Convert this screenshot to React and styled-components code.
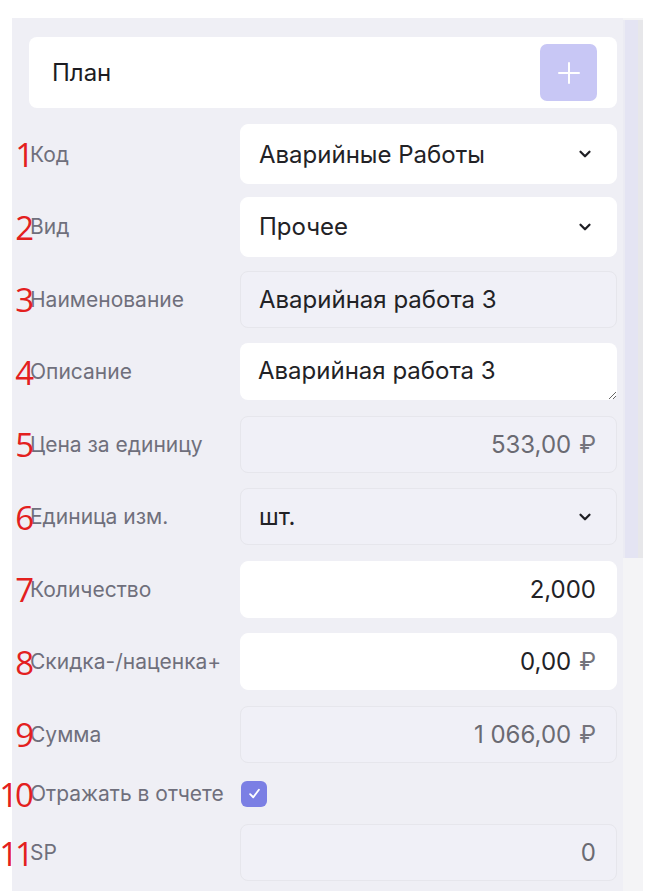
import React from "react";
import styled, { createGlobalStyle } from "styled-components";

const GlobalStyle = createGlobalStyle`
  html, body { margin: 0; padding: 0; background: #ffffff; }
  body { font-family: Inter, "Noto Sans", Arial, sans-serif; overflow: hidden; }
  * { box-sizing: border-box; }
`;

const Page = styled.div`
  padding: 18px 0 0 12px;
  height: 891px;
  overflow: hidden;
`;

const Panel = styled.div`
  width: 631px;
  height: 873px;
  display: flex;
  background: #efeff5;
`;

const Content = styled.div`
  width: 611px;
  flex: none;
  padding: 19px 6px 0 17px;
  display: flex;
  flex-direction: column;
`;

const ScrollTrack = styled.div`
  width: 20px;
  flex: none;
  background: #f4f4f6;
  display: flex;
  flex-direction: column;
  padding-top: 2px;
`;

const ScrollThumb = styled.div`
  height: 538px;
  background: #e4e4f3;
  border-left: 2px solid #ebebf3;
  border-right: 5px solid #e7e7ea;
`;

const HeaderCard = styled.div`
  height: 71px;
  flex: none;
  margin-bottom: 10px;
  background: #ffffff;
  border-radius: 8px;
  display: flex;
  align-items: center;
  justify-content: space-between;
  padding: 0 20px 0 23px;
`;

const Title = styled.div`
  font-size: 24px;
  color: #1c1c22;
`;

const AddButton = styled.button`
  width: 57px;
  height: 57px;
  border: none;
  border-radius: 7px;
  background: #c8c7f5;
  display: flex;
  align-items: center;
  justify-content: center;
  padding: 0;
`;

const Row = styled.div`
  display: grid;
  grid-template-columns: 211px 1fr;
  align-items: center;
  flex: none;
  height: ${(p) => p.$h || 72.5}px;
`;

const Label = styled.div`
  position: relative;
  font-size: 21px;
  color: #6f6f7c;
  padding-left: 1px;
  white-space: nowrap;
`;

const Marker = styled.span`
  position: absolute;
  right: calc(100% - 2px);
  top: 50%;
  transform: translateY(-50%);
  font-family: "Open Sans", "Noto Sans", sans-serif;
  font-size: 33px;
  line-height: 1;
  color: #e3201e;
  letter-spacing: -3px;
`;

const Field = styled.div`
  height: ${(p) => p.$h || 57}px;
  border-radius: 8px;
  display: flex;
  align-items: center;
  justify-content: ${(p) => (p.$right ? "flex-end" : "space-between")};
  padding: 0 ${(p) => (p.$right ? 20 : 22)}px 0 18px;
  font-size: 24px;
  color: ${(p) => (p.$muted ? "#6a6a72" : "#222226")};
  background: ${(p) => (p.$readonly ? "#f0f0f7" : "#ffffff")};
  border: 1px solid ${(p) => (p.$readonly ? "#e6e6ec" : "#ffffff")};
`;

const TextArea = styled.textarea`
  height: 57px;
  width: 100%;
  border: none;
  border-radius: 8px;
  background: #ffffff;
  font-family: Inter, "Noto Sans", Arial, sans-serif;
  font-size: 24px;
  line-height: 29px;
  color: #222226;
  padding: 13px 18px 0;
  resize: vertical;
  outline: none;
  overflow: hidden;
  display: block;
`;

const Rub = styled.span`
  color: #74747c;
  margin-left: 8px;
`;

const Checkbox = styled.span`
  width: 26px;
  height: 26px;
  border-radius: 6px;
  background: #7b7fe4;
  display: inline-flex;
  align-items: center;
  justify-content: center;
  margin-left: 1px;
  vertical-align: middle;
`;

const Chevron = () => (
  <svg width="18" height="18" viewBox="0 0 24 24" fill="none" stroke="#1f1f24" strokeWidth="3" strokeLinecap="round" strokeLinejoin="round">
    <polyline points="6 9 12 15 18 9" />
  </svg>
);

const Plus = () => (
  <svg width="24" height="24" viewBox="0 0 24 24" fill="none" stroke="#ffffff" strokeWidth="2" strokeLinecap="round">
    <line x1="12" y1="2" x2="12" y2="22" />
    <line x1="2" y1="12" x2="22" y2="12" />
  </svg>
);

const Check = () => (
  <svg width="15" height="15" viewBox="0 0 24 24" fill="none" stroke="#ffffff" strokeWidth="3" strokeLinecap="round" strokeLinejoin="round">
    <polyline points="5 13 10 18 19 6" />
  </svg>
);

const FieldRow = ({ n, label, children, h }) => (
  <Row $h={h}>
    <Label>
      <Marker>{n}</Marker>
      {label}
    </Label>
    <div>{children}</div>
  </Row>
);

export default function App() {
  return (
    <>
      <GlobalStyle />
      <Page>
        <Panel>
          <Content>
            <HeaderCard>
              <Title>План</Title>
              <AddButton aria-label="Добавить">
                <Plus />
              </AddButton>
            </HeaderCard>

            <FieldRow n="1" label="Код">
              <Field $h={60}>
                Аварийные Работы
                <Chevron />
              </Field>
            </FieldRow>

            <FieldRow n="2" label="Вид">
              <Field $h={60}>
                Прочее
                <Chevron />
              </Field>
            </FieldRow>

            <FieldRow n="3" label="Наименование">
              <Field $readonly>Аварийная работа 3</Field>
            </FieldRow>

            <FieldRow n="4" label="Описание">
              <TextArea readOnly value="Аварийная работа 3" />
            </FieldRow>

            <FieldRow n="5" label="Цена за единицу">
              <Field $readonly $right $muted>
                533,00<Rub>₽</Rub>
              </Field>
            </FieldRow>

            <FieldRow n="6" label="Единица изм.">
              <Field $readonly>
                шт.
                <Chevron />
              </Field>
            </FieldRow>

            <FieldRow n="7" label="Количество">
              <Field $right>2,000</Field>
            </FieldRow>

            <FieldRow n="8" label="Скидка-/наценка+">
              <Field $right>
                0,00<Rub>₽</Rub>
              </Field>
            </FieldRow>

            <FieldRow n="9" label="Сумма">
              <Field $readonly $right $muted>
                1 066,00<Rub>₽</Rub>
              </Field>
            </FieldRow>

            <FieldRow n="10" label="Отражать в отчете" h={46}>
              <div>
                <Checkbox>
                  <Check />
                </Checkbox>
              </div>
            </FieldRow>

            <FieldRow n="11" label="SP">
              <Field $readonly $right $muted>0</Field>
            </FieldRow>
          </Content>
          <ScrollTrack>
            <ScrollThumb />
          </ScrollTrack>
        </Panel>
      </Page>
    </>
  );
}
